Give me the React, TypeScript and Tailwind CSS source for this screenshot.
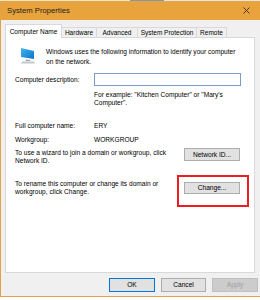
const tabs = [
  { label: 'Computer Name', w: 'w-[57px]', active: true },
  { label: 'Hardware', w: 'w-[35px]' },
  { label: 'Advanced', w: 'w-[41px]' },
  { label: 'System Protection', w: 'w-[59px]' },
  { label: 'Remote', w: 'w-[30px]' },
]

function MonitorIcon() {
  return (
    <svg width="16" height="16" viewBox="0 0 16 16">
      <defs>
        <linearGradient id="scr" x1="0" y1="0" x2="1" y2="1">
          <stop offset="0" stopColor="#3fb6ef" />
          <stop offset="1" stopColor="#1171c9" />
        </linearGradient>
      </defs>
      <polygon points="1,0 14,3 14,11 1,9" fill="url(#scr)" />
      <polygon points="6,11.5 10,12 10.5,13 5.5,13" fill="#9aa3ab" />
      <polygon points="2,13.5 14,13.5 15,15.5 1,15.5" fill="#c4c8cc" />
    </svg>
  )
}

export default function App() {
  return (
    <div className="w-[260px] h-[300px] overflow-hidden bg-white text-black font-['Liberation_Sans',Arial,sans-serif]">
      <div className="flex h-px">
        <div className="w-[130px] bg-[#f4e4cc]" />
        <div className="w-[34px] bg-[#7d98b5]" />
        <div className="flex-1 bg-[#e6e6e6]" />
      </div>

      <div className="border-l border-b border-[#e3a24a] bg-[#f0f0f0] w-[262px]">
        {/* title bar */}
        <div className="h-[19px] bg-[#e9a33d] flex items-center pl-[6px] pr-[12px]">
          <span className="text-[7.7px] text-[#1b1b1b]">System Properties</span>
          <svg className="ml-auto" width="7" height="7" viewBox="0 0 7 7">
            <path d="M0.5 0.5 L6.5 6.5 M6.5 0.5 L0.5 6.5" stroke="#3a2a10" strokeWidth="0.9" />
          </svg>
        </div>

        <div className="pl-[4px] pr-[7px]">
          {/* tabs */}
          <div className="flex items-end h-[17px] text-[6.5px]">
            {tabs.map((t) =>
              t.active ? (
                <div
                  key={t.label}
                  className={`${t.w} h-[14px] -mb-px relative z-10 bg-white border border-b-0 border-[#d9d9d9] flex items-center justify-center`}
                >
                  {t.label}
                </div>
              ) : (
                <div
                  key={t.label}
                  className={`${t.w} h-[10px] bg-[#f0f0f0] border border-b-0 border-l-0 border-[#d9d9d9] flex items-center justify-center`}
                >
                  {t.label}
                </div>
              )
            )}
          </div>

          {/* panel */}
          <div className="relative h-[236px] bg-white border border-[#d9d9d9] text-[6.6px] leading-[8px]">
            <div className="flex mt-[9px] pl-[14px]">
              <div className="mt-[1px]">
                <MonitorIcon />
              </div>
              <div className="ml-[10px] leading-[9.5px]">
                Windows uses the following information to identify your computer
                <br />
                on the network.
              </div>
            </div>

            <div className="flex items-center mt-[7px] h-[13px] pl-[9px]">
              <span className="w-[79px]">Computer description:</span>
              <div className="w-[147px] h-[13px] border border-[#7a9cc6] bg-white" />
            </div>

            <div className="mt-[5px] pl-[88px]">
              For example: &quot;Kitchen Computer&quot; or &quot;Mary&apos;s
              <br />
              Computer&quot;.
            </div>

            <div className="flex mt-[15px] pl-[9px]">
              <span className="w-[79px]">Full computer name:</span>
              <span>ERY</span>
            </div>

            <div className="flex mt-[6px] pl-[9px]">
              <span className="w-[79px]">Workgroup:</span>
              <span>WORKGROUP</span>
            </div>

            <div className="flex items-start mt-[4px] pl-[9px] pr-[14px]">
              <div className="mt-[1px]">
                To use a wizard to join a domain or workgroup, click
                <br />
                Network ID.
              </div>
              <div className="ml-auto w-[56px] h-[13px] bg-[#e1e1e1] border border-[#adadad] flex items-center justify-center">
                Network ID...
              </div>
            </div>

            <div className="flex items-start mt-[15px] pl-[9px] pr-[14px]">
              <div>
                To rename this computer or change its domain or
                <br />
                workgroup, click Change.
              </div>
              <div className="ml-auto mt-[2px] w-[56px] h-[12px] bg-[#e1e1e1] border border-[#adadad] flex items-center justify-center">
                Change...
              </div>
            </div>

            <div className="absolute left-[171px] top-[137px] w-[72px] h-[32px] border-2 border-[#f01c24]" />
          </div>

          {/* dialog buttons */}
          <div className="flex justify-end gap-[6px] mt-[5px] -mr-[3px] text-[6.6px]">
            <div className="w-[46px] h-[14px] bg-[#e1e1e1] border border-[#0078d7] flex items-center justify-center">
              OK
            </div>
            <div className="w-[45px] h-[14px] bg-[#e1e1e1] border border-[#adadad] flex items-center justify-center">
              Cancel
            </div>
            <div className="w-[46px] h-[14px] bg-[#cccccc] border border-[#bfbfbf] text-[#a0a0a0] flex items-center justify-center">
              Apply
            </div>
          </div>
          <div className="h-[4px]" />
        </div>
      </div>

      <div className="pl-[98px] pt-[1px] text-[7px] text-[#222]">Windows activation</div>
    </div>
  )
}
